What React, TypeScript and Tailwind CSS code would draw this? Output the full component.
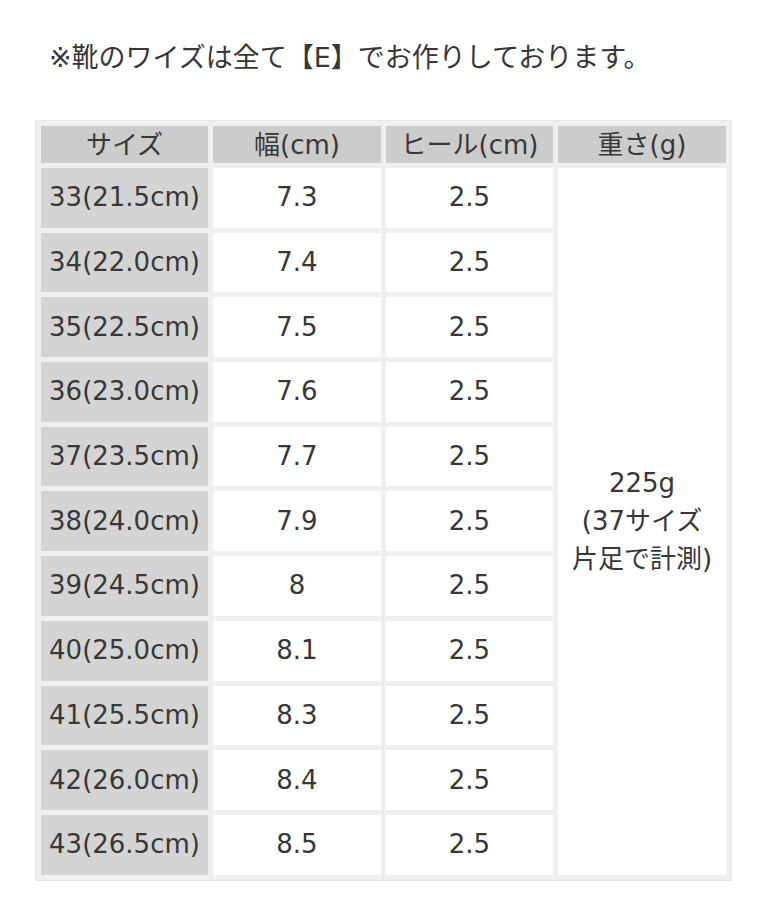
import React from 'react';

const rows = [
  ['33(21.5cm)', '7.3', '2.5'],
  ['34(22.0cm)', '7.4', '2.5'],
  ['35(22.5cm)', '7.5', '2.5'],
  ['36(23.0cm)', '7.6', '2.5'],
  ['37(23.5cm)', '7.7', '2.5'],
  ['38(24.0cm)', '7.9', '2.5'],
  ['39(24.5cm)', '8', '2.5'],
  ['40(25.0cm)', '8.1', '2.5'],
  ['41(25.5cm)', '8.3', '2.5'],
  ['42(26.0cm)', '8.4', '2.5'],
  ['43(26.5cm)', '8.5', '2.5'],
];

export default function App() {
  return (
    <div
      className="min-h-[920px] bg-white text-[#383838] text-[26px]"
      style={{ fontFamily: '"DejaVu Sans", "Noto Sans CJK JP", sans-serif' }}
    >
      <p className="pt-[39px] pl-[49px] text-[27px] leading-[38px]">※靴のワイズは全て【E】でお作りしております。</p>

      <table className="mt-[43px] ml-[35px] border-separate border-spacing-[5px] border border-[#e6e6e6] bg-[#efefef]">
        <thead>
          <tr>
            {['サイズ', '幅(cm)', 'ヒール(cm)', '重さ(g)'].map((h, i) => (
              <th
                key={h}
                className={`h-[37px] p-0 bg-[#cccccc] font-normal text-center leading-none ${i % 2 === 0 ? 'w-[167px]' : 'w-[168px]'}`}
              >
                {h}
              </th>
            ))}
          </tr>
        </thead>
        <tbody>
          {rows.map((r, i) => (
            <tr key={r[0]}>
              <td className="h-[59.7px] p-0 bg-[#d4d4d4] text-center">{r[0]}</td>
              <td className="h-[59.7px] p-0 bg-white text-center">{r[1]}</td>
              <td className="h-[59.7px] p-0 bg-white text-center">{r[2]}</td>
              {i === 0 && (
                <td rowSpan={rows.length} className="p-0 bg-white text-center align-middle leading-[38px]">
                  225g
                  <br />
                  (37サイズ
                  <br />
                  片足で計測)
                </td>
              )}
            </tr>
          ))}
        </tbody>
      </table>
    </div>
  );
}
